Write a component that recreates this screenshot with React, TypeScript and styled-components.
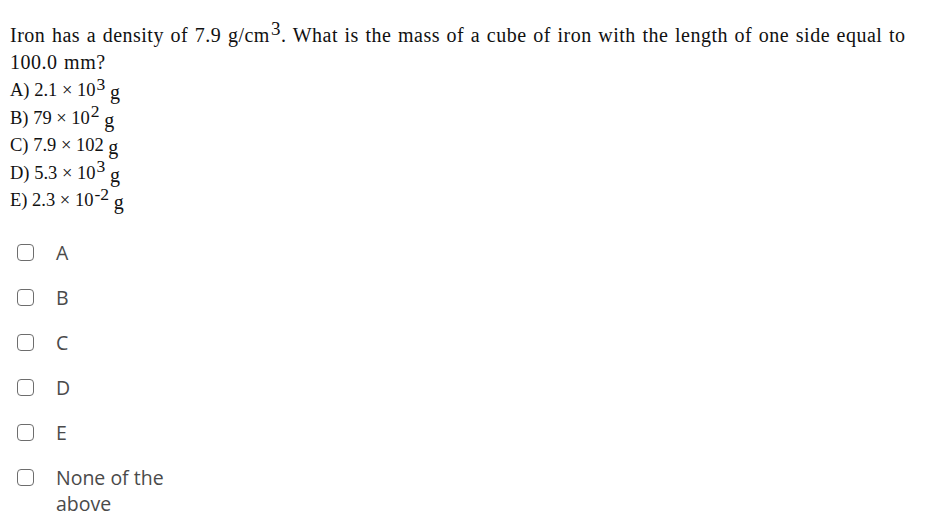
import React from "react";
import styled, { createGlobalStyle } from "styled-components";

const Global = createGlobalStyle`
  html, body { margin: 0; padding: 0; background: #fff; }
  body { width: 939px; height: 519px; overflow: hidden; }
`;

const Page = styled.div`
  padding: 22px 10px 0 10px;
  display: flex;
  flex-direction: column;
`;

const Question = styled.div`
  font-family: "Liberation Serif", serif;
  font-size: 20px;
  line-height: 27px;
  letter-spacing: 0.5px;
  word-spacing: 1.1px;
  color: #111;
  width: 905px;
`;

const Choices = styled.div`
  font-family: "Liberation Serif", serif;
  font-size: 18.5px;
  color: #111;
  display: flex;
  flex-direction: column;
`;

const ChoiceLine = styled.div`
  line-height: 27.5px;
  height: 27.5px;
`;

const Sup = styled.sup`
  font-size: 0.95em;
  line-height: 0;
  vertical-align: 0.35em;
  margin-left: 1px;
`;

const G = styled.span`
  font-family: "Liberation Serif", serif;
  font-size: 20px;
  display: inline-block;
  transform: translateY(3px);
`;

const Options = styled.div`
  margin-top: 26px;
  display: flex;
  flex-direction: column;
  gap: 19px;
`;

const Option = styled.label`
  display: flex;
  align-items: flex-start;
  gap: 22px;
  padding-left: 7px;
  font-family: "Open Sans", sans-serif;
  font-size: 19.5px;
  line-height: 26px;
  color: #4a4a4a;
`;

const Box = styled.span`
  flex: none;
  box-sizing: border-box;
  width: 17px;
  height: 17px;
  margin-top: 4.5px;
  border: 1.6px solid #6d6d6d;
  border-radius: 4px;
  background: #fff;
`;

const Label = styled.span`
  width: 122px;
`;

const choices: { pre: string; exp?: string }[] = [
  { pre: "A) 2.1 × 10", exp: "3" },
  { pre: "B) 79 × 10", exp: "2" },
  { pre: "C) 7.9 × 102" },
  { pre: "D) 5.3 × 10", exp: "3" },
  { pre: "E) 2.3 × 10", exp: "-2" },
];

const opts = ["A", "B", "C", "D", "E", "None of the above"];

export default function App() {
  return (
    <>
      <Global />
      <Page>
        <Question>
          Iron has a density of 7.9 g/cm<Sup>3</Sup>. What is the mass of a cube of iron with the length of one side equal to 100.0 mm?
        </Question>
        <Choices>
          {choices.map((c) => (
            <ChoiceLine key={c.pre}>
              {c.pre}
              {c.exp && <Sup>{c.exp}</Sup>} <G>g</G>
            </ChoiceLine>
          ))}
        </Choices>
        <Options>
          {opts.map((o) => (
            <Option key={o}>
              <Box />
              <Label>{o}</Label>
            </Option>
          ))}
        </Options>
      </Page>
    </>
  );
}
